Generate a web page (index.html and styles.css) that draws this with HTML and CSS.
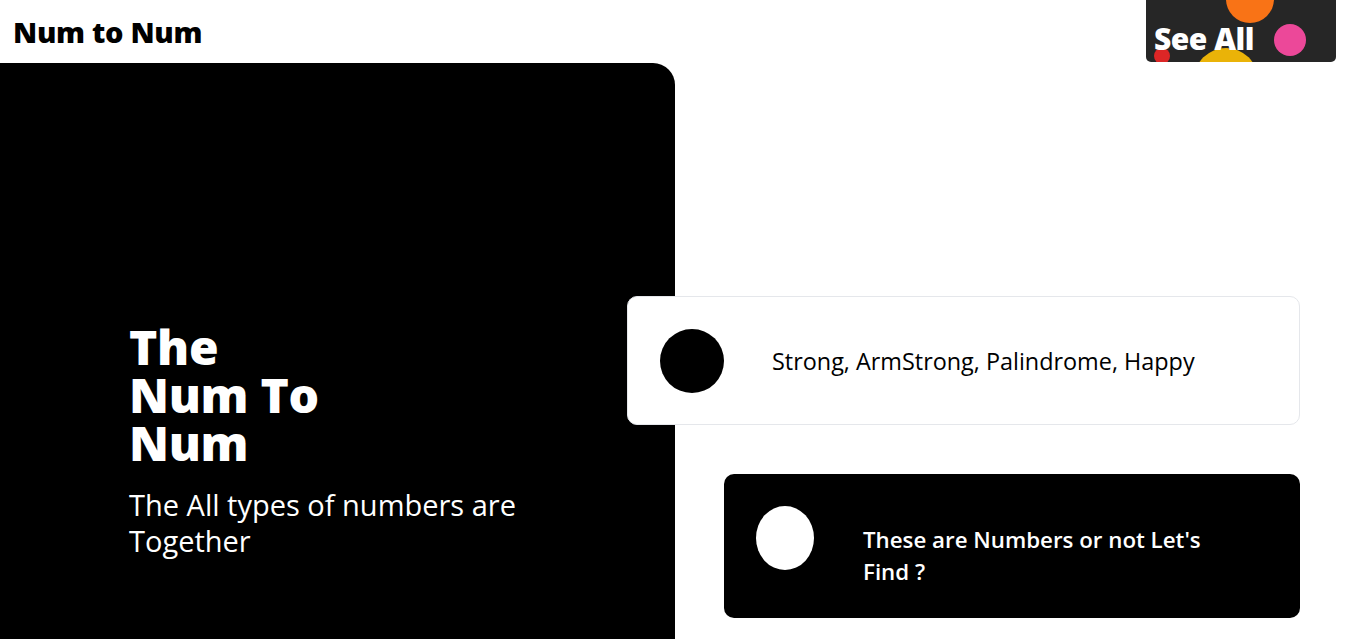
FILE: index.html
```html
<!DOCTYPE html>
<html>
<head>
<meta charset="utf-8">
<link rel="stylesheet" href="styles.css">
</head>
<body>
<header class="topbar">
  <h1 class="brand">Num to Num</h1>
  <button class="see-all">
    <span class="dot dot-orange"></span>
    <span class="dot dot-pink"></span>
    <span class="dot dot-red"></span>
    <span class="dot dot-yellow"></span>
    <span class="see-all-label">See All</span>
  </button>
</header>
<main class="main">
  <section class="hero">
    <h2 class="hero-title">The<br>Num To<br>Num</h2>
    <p class="hero-sub">The All types of numbers are Together</p>
  </section>
  <section class="cards">
    <div class="card card-light">
      <span class="badge badge-dark"></span>
      <p class="card-text">Strong, ArmStrong, Palindrome, Happy</p>
    </div>
    <div class="card card-dark">
      <span class="badge badge-light"></span>
      <p class="card-text card-text-bold">These are Numbers or not Let's Find ?</p>
    </div>
  </section>
</main>
</body>
</html>
```
FILE: styles.css
```css
* { box-sizing: border-box; }
html, body { margin: 0; padding: 0; }
body {
  font-family: "Open Sans", "Noto Sans", sans-serif;
  background: #fff;
  color: #000;
  overflow: hidden;
  height: 639px;
}
.topbar {
  display: flex;
  justify-content: space-between;
  align-items: flex-start;
  height: 63px;
  padding-left: 13px;
  padding-right: 10px;
}
.brand {
  margin: 0;
  padding-top: 14px;
  font-size: 29px;
  line-height: 36px;
  font-weight: 800;
  letter-spacing: -0.3px;
}
.see-all {
  position: relative;
  overflow: hidden;
  width: 190px;
  height: 62px;
  background: #262626;
  border: none;
  border-radius: 0 0 5px 5px;
  padding: 0 0 0 8px;
  text-align: left;
  font-family: inherit;
}
.see-all-label {
  position: relative;
  color: #fff;
  font-size: 30px;
  font-weight: 800;
  letter-spacing: -0.5px;
  line-height: 36px;
  display: block;
  padding-top: 16px;
}
.dot { position: absolute; border-radius: 50%; }
.dot-orange { background: #f97316; width: 48px; height: 48px; left: 80px; top: -25px; }
.dot-pink { background: #ec4899; width: 32px; height: 32px; left: 128px; top: 24px; }
.dot-red { background: #dc2626; width: 16px; height: 16px; left: 8px; top: 48px; }
.dot-yellow { background: #eab308; width: 64px; height: 64px; left: 48px; top: 48px; }

.main {
  display: flex;
  align-items: flex-start;
}
.hero {
  flex: 0 0 675px;
  height: 600px;
  background: #000;
  color: #fff;
  border-top-right-radius: 22px;
  padding: 260px 0 0 129px;
}
.hero-title {
  margin: 0;
  font-size: 48px;
  line-height: 48px;
  font-weight: 800;
  letter-spacing: -0.3px;
}
.hero-sub {
  margin: 20px 0 0;
  font-size: 29px;
  line-height: 36px;
  width: 420px;
}
.cards {
  margin-left: -48px;
  padding-top: 233px;
  display: flex;
  flex-direction: column;
  gap: 49px;
  flex: 0 0 673px;
}
.card {
  display: flex;
  border-radius: 10px;
}
.card-light {
  align-items: center;
  height: 129px;
  background: #fff;
  border: 1px solid #e5e7eb;
  padding-left: 32px;
  gap: 48px;
}
.card-dark {
  align-items: flex-start;
  height: 144px;
  margin-left: 97px;
  background: #000;
  color: #fff;
  padding: 32px 0 0 32px;
  gap: 49px;
}
.badge { flex: 0 0 auto; border-radius: 50%; }
.badge-dark { width: 64px; height: 64px; background: #000; }
.badge-light { width: 58px; height: 64px; background: #fff; }
.card-text {
  margin: 0;
  font-size: 23.4px;
  line-height: 32px;
}
.card-text-bold {
  margin-top: 18px;
  font-size: 22.3px;
  font-weight: 600;
  width: 360px;
}
```
